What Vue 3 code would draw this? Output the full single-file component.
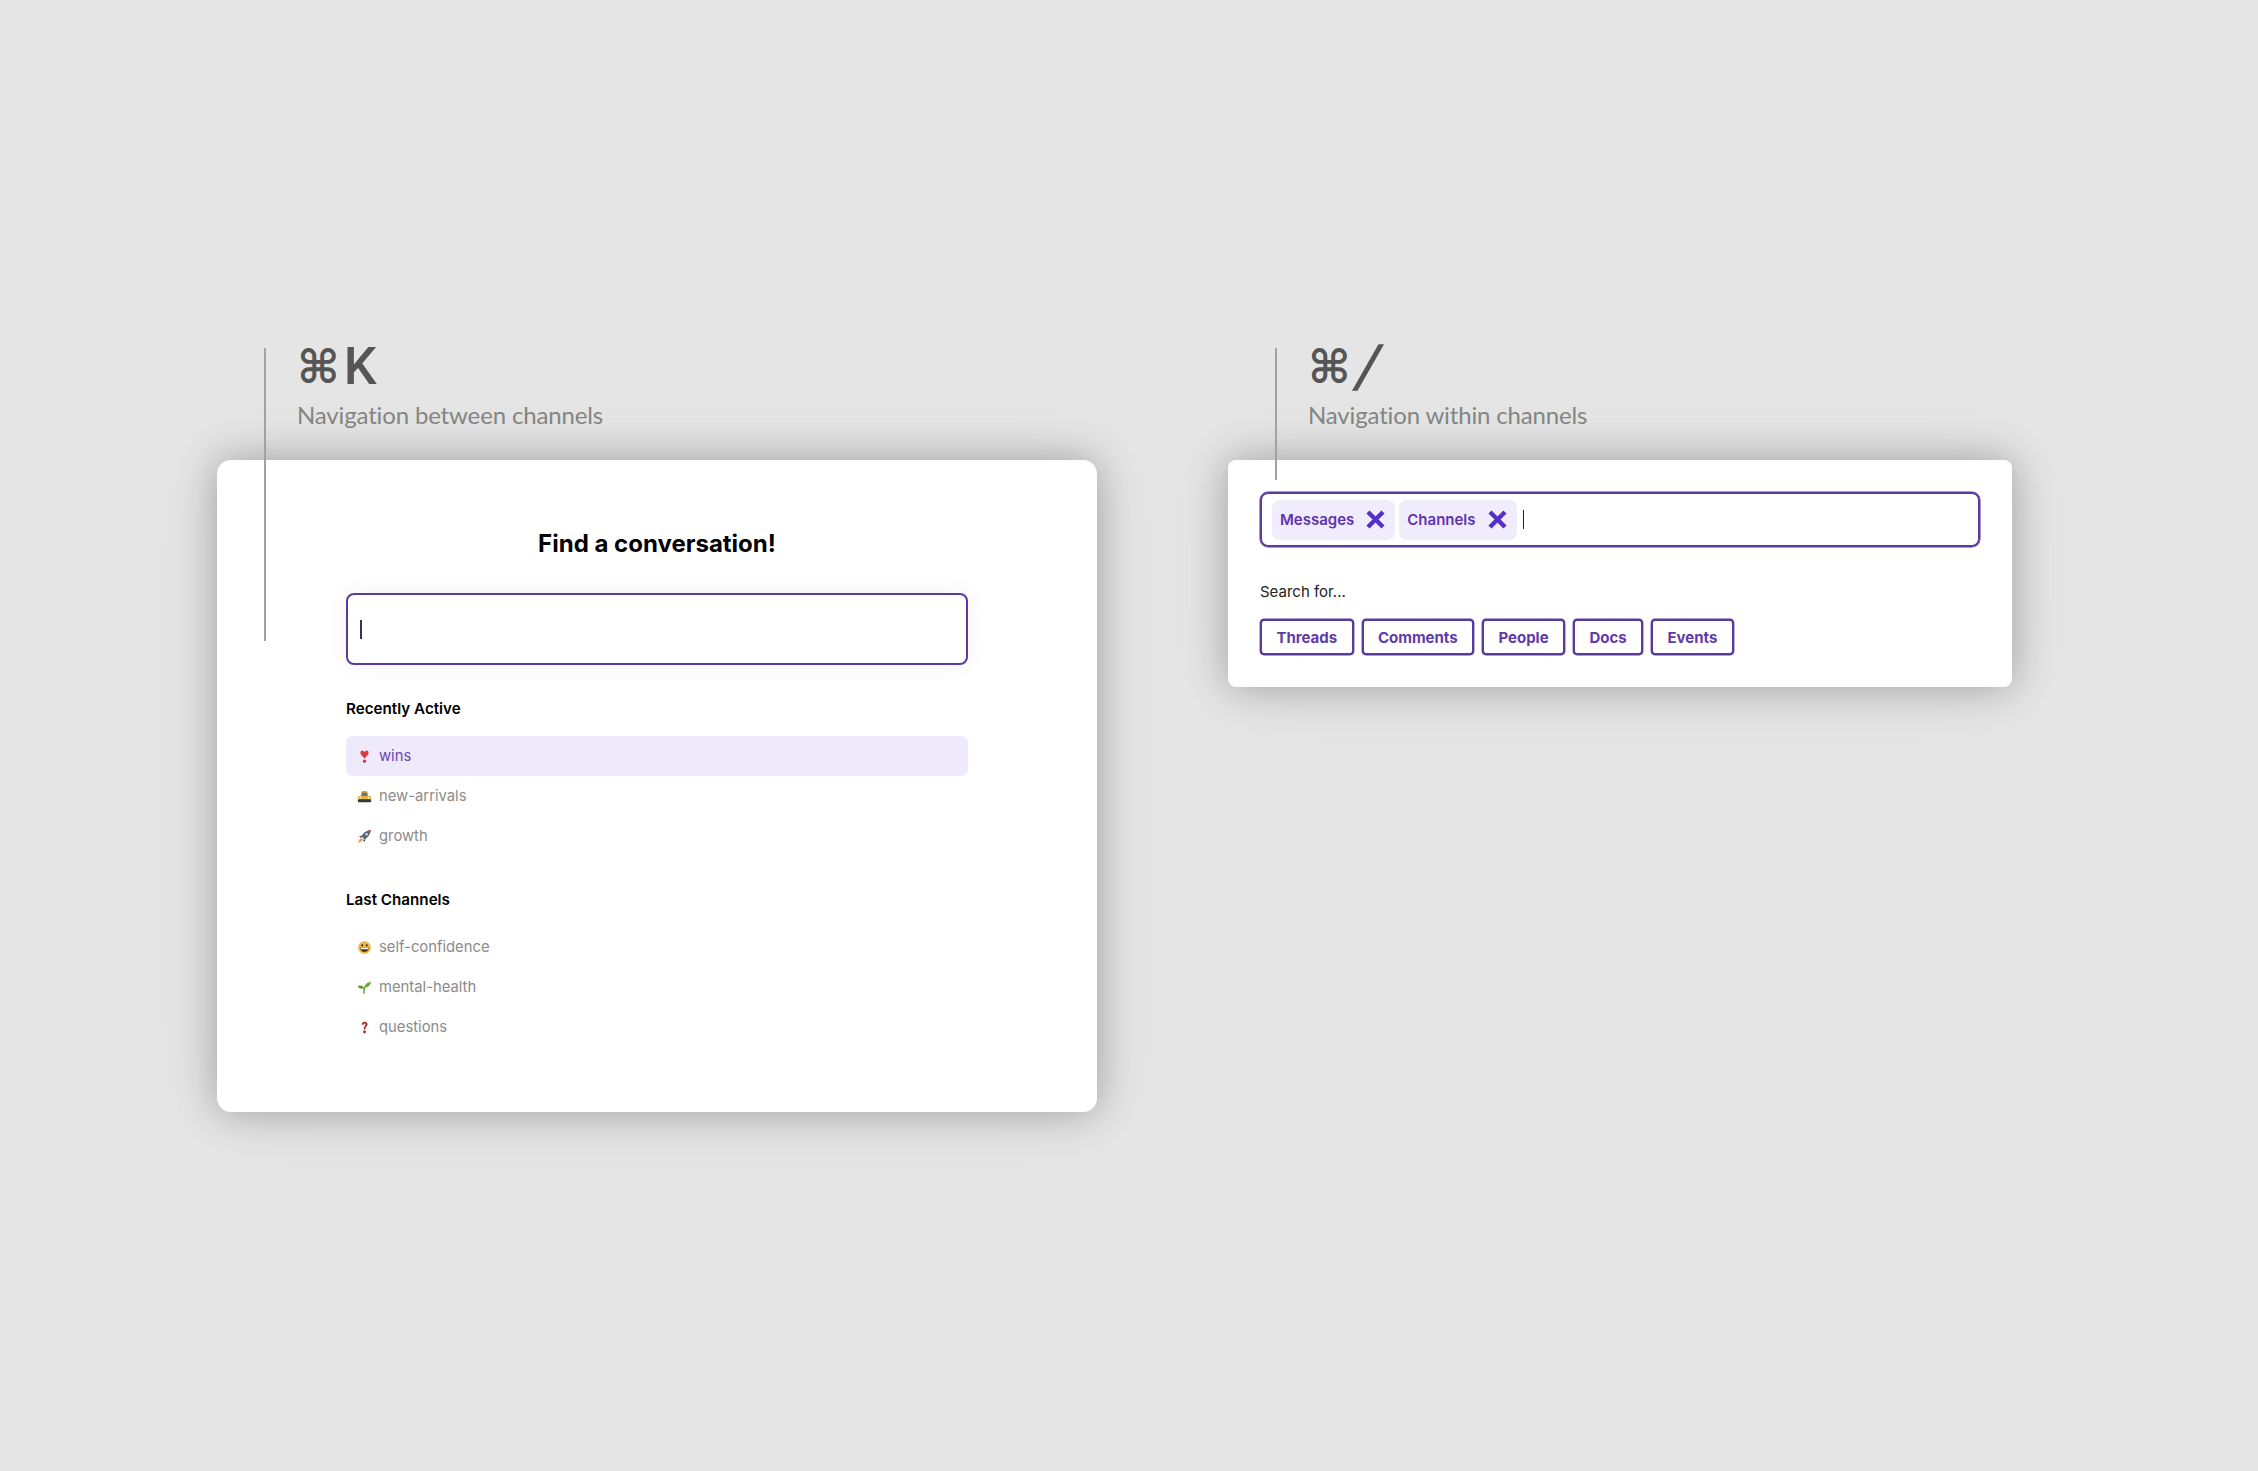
<script setup>
const recent = [
  { icon: 'heart', name: 'wins', active: true },
  { icon: 'taxi', name: 'new-arrivals' },
  { icon: 'rocket', name: 'growth' }
]
const last = [
  { icon: 'face', name: 'self-confidence' },
  { icon: 'sprout', name: 'mental-health' },
  { icon: 'question', name: 'questions' }
]
const chips = ['Messages', 'Channels']
const filters = ['Threads', 'Comments', 'People', 'Docs', 'Events']
const groups = [
  { title: 'Recently Active', items: recent },
  { title: 'Last Channels', items: last }
]
</script>

<template>
  <main class="page">
    <section class="panel panel-left">
      <header class="head">
        <h2 class="keys"><span class="cmd">⌘</span>K</h2>
        <p class="sub">Navigation between channels</p>
      </header>
      <div class="card card-left">
        <span class="rule rule-left"></span>
        <h1 class="title">Find a conversation!</h1>
        <div class="search"><span class="caret caret-purple"></span></div>
        <div v-for="g in groups" :key="g.title" class="group">
          <h3 class="group-title">{{ g.title }}</h3>
          <ul class="list">
            <li v-for="it in g.items" :key="it.name" class="row" :class="{ active: it.active }">
              <svg class="emoji" viewBox="0 0 16 16" aria-hidden="true">
                <template v-if="it.icon === 'heart'">
                  <path d="M8 10 C6.6 8.2 3.6 6.6 3.6 4 C3.6 2.4 5 1.4 6.2 1.8 C7 2 7.6 2.6 8 3.2 C8.4 2.6 9 2 9.8 1.8 C11 1.4 12.4 2.4 12.4 4 C12.4 6.6 9.4 8.2 8 10 Z" fill="#dd3b43" />
                  <circle cx="8" cy="13" r="1.7" fill="#d8343c" />
                </template>
                <template v-else-if="it.icon === 'taxi'">
                  <path d="M3.6 8 L4.8 3.2 C5 2.4 5.5 2 6.2 2 H9.8 C10.5 2 11 2.4 11.2 3.2 L12.4 8 Z" fill="#d3a53a" />
                  <path d="M5 7.6 L5.8 4 H10.2 L11 7.6 Z" fill="#5d7482" />
                  <rect x="1" y="7.4" width="14" height="4.2" rx="1.4" fill="#e3b548" />
                  <rect x="1" y="11" width="14" height="3" rx="1" fill="#34363b" />
                  <circle cx="3.6" cy="9.4" r="1" fill="#fff3c0" />
                  <circle cx="12.4" cy="9.4" r="1" fill="#fff3c0" />
                </template>
                <template v-else-if="it.icon === 'rocket'">
                  <path d="M4.8 8 C6 4.6 9.4 1.8 14.6 1 C14 6 11.2 9.6 8 11 Z" fill="#55637b" />
                  <path d="M11 2 C12.2 1.6 13.4 1.2 14.6 1 C14.5 2.3 14.2 3.6 13.8 4.8 Z" fill="#c8453f" />
                  <circle cx="10.2" cy="5.6" r="1.3" fill="#d5e6f4" />
                  <path d="M5.4 6.8 L2.2 8 L4.4 9.6 Z M9.2 10.6 L8 13.8 L6.4 11.6 Z" fill="#39435a" />
                  <path d="M5 9.6 C3 10.2 1.8 12 1 14.8 C3.8 14 5.8 12.8 6.4 11 Z" fill="#eea02e" />
                </template>
                <template v-else-if="it.icon === 'face'">
                  <circle cx="8" cy="8" r="6.8" fill="#e9b949" />
                  <ellipse cx="5.6" cy="5.6" rx="1" ry="1.3" fill="#5a4020" />
                  <ellipse cx="10.4" cy="5.6" rx="1" ry="1.3" fill="#5a4020" />
                  <path d="M3.4 8.2 H12.6 C12.4 11 10.4 12.8 8 12.8 C5.6 12.8 3.6 11 3.4 8.2 Z" fill="#5a3a1c" />
                  <path d="M4.2 8.4 H11.8 V9.8 H4.2 Z" fill="#fff" />
                </template>
                <template v-else-if="it.icon === 'sprout'">
                  <path d="M7.6 14.6 C7.4 11.8 7.6 9.4 8.2 7.6" fill="none" stroke="#5f9a3d" stroke-width="1.5" />
                  <path d="M7.8 8.2 C8.6 4 11.4 2.4 15 2.2 C14.6 5.8 11.6 8.2 7.8 8.2 Z" fill="#6aa83f" />
                  <path d="M7.8 8.6 C6.2 5.8 3.6 5.4 0.8 6.4 C2 9.4 5 10 7.8 8.6 Z" fill="#5b9a38" />
                </template>
                <template v-else>
                  <path d="M5 5 C5 2.8 6.4 1.8 8.2 1.8 C10 1.8 11.2 2.9 11.2 4.6 C11.2 6.6 8.9 7 8.9 10.2 H7.2 C7.2 6.8 9 6.2 9 4.8 C9 4 8.7 3.6 8.1 3.6 C7.4 3.6 7.1 4.2 7.1 5 Z" fill="#a8262e" />
                  <circle cx="8" cy="12.8" r="1.5" fill="#a8262e" />
                </template>
              </svg>
              <span>{{ it.name }}</span>
            </li>
          </ul>
        </div>
      </div>
    </section>

    <section class="panel panel-right">
      <header class="head">
        <h2 class="keys"><span class="cmd">⌘</span><span class="slash">/</span></h2>
        <p class="sub">Navigation within channels</p>
      </header>
      <div class="card card-right">
        <span class="rule rule-right"></span>
        <div class="tokens">
          <span v-for="c in chips" :key="c" class="chip">
            {{ c }}
            <svg class="x" viewBox="0 0 19 19" aria-hidden="true">
              <path d="M2 2 L17 17 M17 2 L2 17" fill="none" stroke="#5630c4" stroke-width="4.4" />
            </svg>
          </span>
          <span class="caret"></span>
        </div>
        <p class="for">Search for...</p>
        <div class="filters">
          <button v-for="f in filters" :key="f" class="filter" type="button">{{ f }}</button>
        </div>
      </div>
    </section>
  </main>
</template>

<style>
html, body { margin: 0; background: #e5e5e5; }
</style>

<style scoped>
.page {
  box-sizing: border-box;
  height: 1471px;
  padding: 335px 0 0 217px;
  display: flex;
  align-items: flex-start;
  gap: 131px;
  background: #e5e5e5;
  font-family: Inter, "Liberation Sans", sans-serif;
  overflow: hidden;
}
.panel-left { width: 880px; }
.panel-right { width: 784px; }
.head {
  box-sizing: border-box;
  height: 125px;
  padding-left: 80px;
  font-family: Lato, "Open Sans", sans-serif;
}
.keys {
  margin: 0;
  height: 64px;
  font-family: Roboto, sans-serif;
  font-size: 52px;
  line-height: 66px;
  font-weight: 500;
  color: #555;
  display: flex;
  align-items: center;
  gap: 4px;
}
.cmd {
  font-family: "DejaVu Sans", sans-serif;
  font-weight: 700;
  font-size: 46px;
}
.slash {
  display: inline-block;
  font-size: 60px;
  margin-left: 2px;
  transform: skewX(-12deg);
}
.sub {
  margin: 0;
  font-size: 24px;
  line-height: 32px;
  color: #868686;
  letter-spacing: -0.15px;
}
.card {
  position: relative;
  box-sizing: border-box;
  background: #fff;
  box-shadow: 0 0 40px rgba(0, 0, 0, 0.29), 0 0 90px rgba(0, 0, 0, 0.04);
}
.card-left {
  height: 652px;
  padding: 65px 129px 0;
  border-radius: 14px;
}
.card-right {
  height: 227px;
  padding: 32px;
  border-radius: 8px;
}
.rule {
  position: absolute;
  width: 2px;
  background: #a2a2a2;
}
.rule-left { left: 47px; top: -112px; height: 293px; }
.rule-right { left: 47px; top: -112px; height: 132px; }
.title {
  margin: 0;
  font-size: 24px;
  line-height: 38px;
  font-weight: 700;
  text-align: center;
  color: #000;
}
.search {
  box-sizing: border-box;
  height: 72px;
  margin-top: 30px;
  padding-left: 12px;
  border: 2px solid #5a3a9c;
  border-radius: 8px;
  display: flex;
  align-items: center;
  box-shadow: 0 0 24px rgba(0, 0, 0, 0.06);
}
.caret {
  display: inline-block;
  width: 1.5px;
  height: 19px;
  background: #222;
}
.caret-purple { background: #3d2c6e; }
.group { margin-top: 34px; }
.group-title {
  margin: 0;
  font-size: 15.2px;
  line-height: 20px;
  font-weight: 600;
  color: #000;
}
.list {
  list-style: none;
  margin: 17px 0 0;
  padding: 0;
}
.row {
  height: 40px;
  padding-left: 11px;
  display: flex;
  align-items: center;
  gap: 7px;
  border-radius: 6px;
  font-size: 14.8px;
  color: #8b8b8b;
}
.row.active {
  background: #eeeafb;
  color: #6a45b5;
}
.emoji { width: 15px; height: 15px; flex: none; }
.tokens {
  box-sizing: border-box;
  height: 55px;
  padding: 0 6px 0 10px;
  border: 2px solid #5a3a9c;
  border-radius: 8px;
  display: flex;
  align-items: center;
  gap: 4px;
  box-shadow: 0 0 0 0.5px #5a3a9c;
}
.chip {
  box-sizing: border-box;
  height: 40px;
  padding: 0 10px 0 8px;
  display: inline-flex;
  align-items: center;
  gap: 12px;
  border-radius: 8px;
  background: #f0ecfc;
  font-size: 15px;
  font-weight: 600;
  color: #5f33b0;
}
.x { width: 19px; height: 19px; flex: none; }
.tokens .caret { margin-left: 2px; }
.for {
  margin: 35px 0 0;
  font-size: 15px;
  line-height: 20px;
  color: #222;
}
.filters {
  display: flex;
  gap: 8px;
  margin-top: 17px;
}
.filter {
  box-sizing: border-box;
  height: 36px;
  padding: 0 14.4px;
  border: 2px solid #5a3a9c;
  border-radius: 4px;
  background: #fff;
  font-family: inherit;
  font-size: 15px;
  font-weight: 700;
  color: #5f3ba8;
  box-shadow: 0 0 0 0.4px #5a3a9c;
}
</style>
